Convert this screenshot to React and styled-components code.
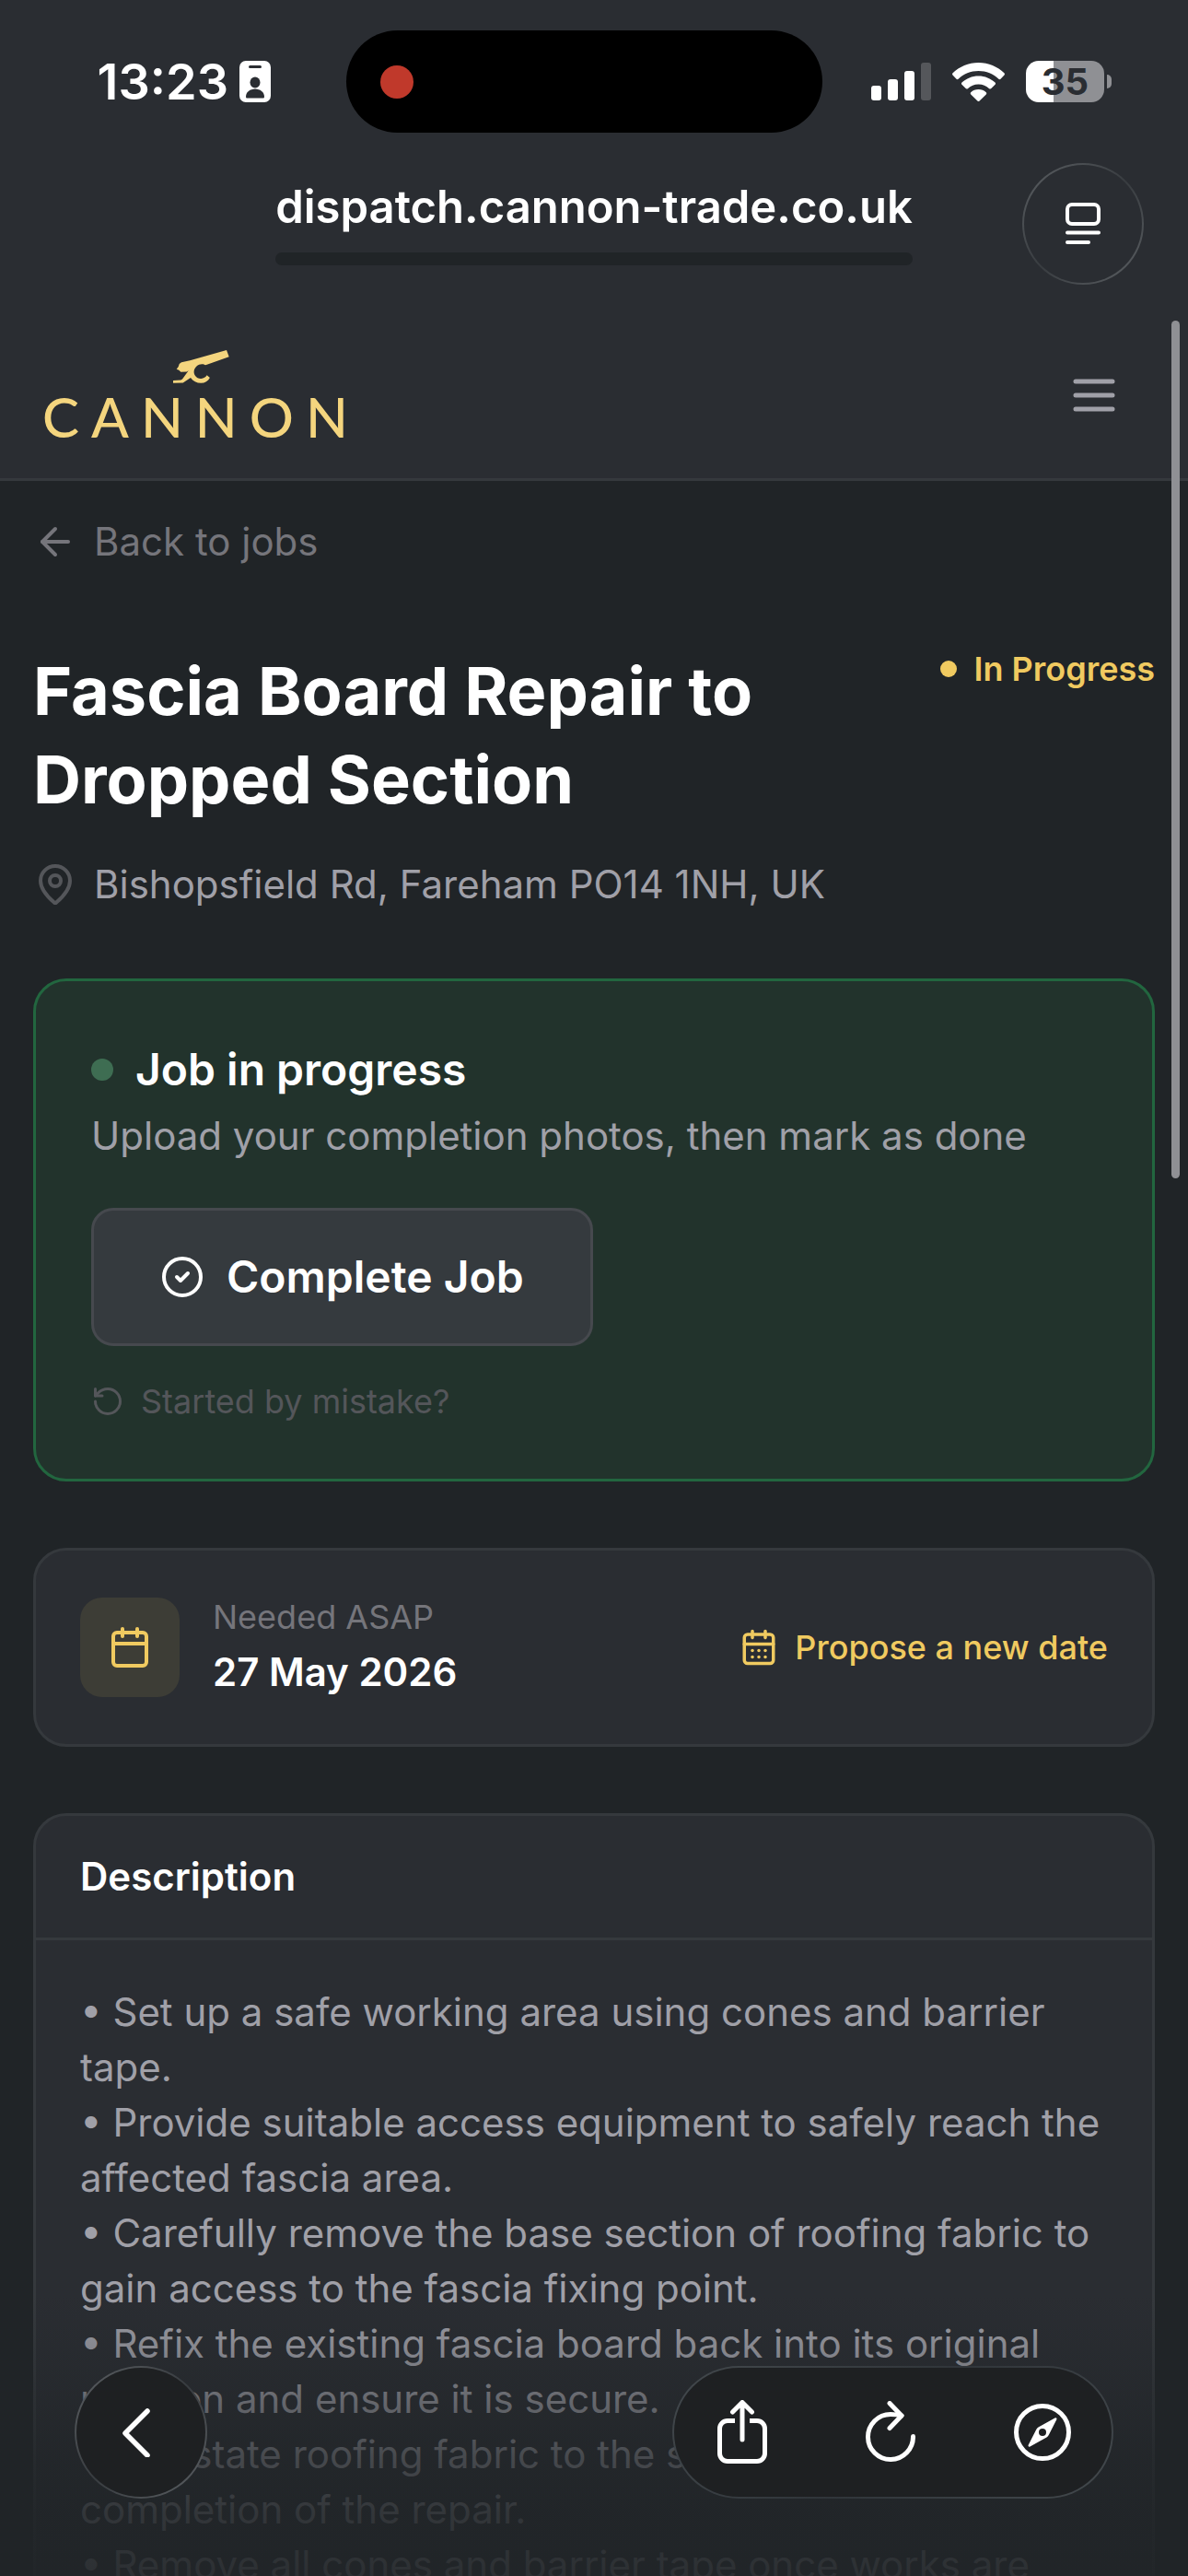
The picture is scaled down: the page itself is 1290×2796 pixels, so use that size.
import React from "react";
import styled, { createGlobalStyle } from "styled-components";
import {
  ArrowLeft,
  Calendar,
  CalendarDays,
  CircleCheck,
  MapPin,
  RotateCcw,
} from "lucide-react";

const colors = {
  page: "#202427",
  surface: "#2a2d32",
  line: "#35393d",
  text: "#ffffff",
  soft: "#a0a0a8",
  muted: "#75757b",
  faint: "#54565a",
  gold: "#f0ca60",
  logo: "#f4d57e",
  glass: "#1e2022",
};

const GlobalStyle = createGlobalStyle`
  *, *::before, *::after {
    box-sizing: border-box;
  }
  body {
    margin: 0;
    background: ${colors.page};
    color: ${colors.text};
    font-family: Inter, "Liberation Sans", sans-serif;
  }
  h1, h2, p {
    margin: 0;
  }
  button {
    font: inherit;
    color: inherit;
    border: 0;
    padding: 0;
    background: none;
    cursor: pointer;
  }
  a {
    color: inherit;
    text-decoration: none;
  }
  svg {
    display: block;
    flex-shrink: 0;
  }
`;

const Screen = styled.div`
  position: relative;
  display: flex;
  flex-direction: column;
  height: 100vh;
  overflow: hidden;
`;

/* ---------- status bar ---------- */

const StatusBar = styled.div`
  flex-shrink: 0;
  display: grid;
  grid-template-columns: 1fr 517px 1fr;
  align-items: center;
  padding: 33px 83px 33px 62px;
  background: ${colors.surface};
`;

const StatusLeft = styled.div`
  display: flex;
  align-items: center;
  justify-content: flex-end;
  gap: 12px;
  padding-right: 82px;
`;

const Clock = styled.span`
  font-size: 54px;
  line-height: 60px;
  font-weight: 600;
`;

const Island = styled.div`
  display: flex;
  align-items: center;
  height: 111px;
  padding: 0 37px;
  border-radius: 56px;
  background: #000000;
`;

const RecordDot = styled.span`
  width: 36px;
  height: 36px;
  border-radius: 50%;
  background: #c0392b;
`;

const StatusRight = styled.div`
  display: flex;
  align-items: center;
  justify-content: flex-end;
  gap: 23px;
`;

const Battery = styled.div`
  display: flex;
  align-items: center;
  gap: 3px;
`;

const BatteryBody = styled.span`
  width: 85px;
  height: 45px;
  border-radius: 14px;
  background: linear-gradient(to right, #ffffff 35%, #8f9094 35%);
  color: ${colors.surface};
  font-size: 40px;
  line-height: 45px;
  font-weight: 700;
  text-align: center;
`;

const BatteryTip = styled.span`
  width: 5px;
  height: 15px;
  border-radius: 0 5px 5px 0;
  background: #8f9094;
`;

/* ---------- browser address row ---------- */

const AddressRow = styled.div`
  flex-shrink: 0;
  display: grid;
  grid-template-columns: 1fr auto 1fr;
  padding: 0 48px 30px;
  background: ${colors.surface};
`;

const Address = styled.div`
  grid-column: 2;
  padding-top: 18px;
`;

const AddressText = styled.div`
  font-size: 49px;
  line-height: 60px;
  font-weight: 600;
`;

const AddressTrack = styled.div`
  height: 14px;
  margin-top: 19px;
  border-radius: 7px;
  background: ${colors.page};
`;

const RoundButton = styled.button`
  display: flex;
  align-items: center;
  justify-content: center;
  justify-self: end;
  width: ${({ $size }) => $size}px;
  height: ${({ $size }) => $size}px;
  border: 2px solid transparent;
  border-radius: 50%;
  background:
    linear-gradient(${({ $fill }) => $fill}, ${({ $fill }) => $fill}) padding-box,
    linear-gradient(135deg, #5c6064, #383c40 50%, #5c6064) border-box;
`;

/* ---------- site header ---------- */

const SiteHeader = styled.header`
  flex-shrink: 0;
  display: flex;
  align-items: center;
  justify-content: space-between;
  height: 183px;
  padding: 0 36px;
  background: ${colors.surface};
  border-bottom: 3px solid ${colors.line};
`;

const Logo = styled.a`
  display: flex;
  flex-direction: column;
  align-items: center;
  gap: 8px;
  padding-left: 10px;
  color: ${colors.logo};
`;

const Wordmark = styled.span`
  font-family: Lato, sans-serif;
  font-size: 60px;
  line-height: 54px;
  font-weight: 500;
  letter-spacing: 13px;
`;

const MenuButton = styled.button`
  padding: 36px;
`;

/* ---------- page ---------- */

const Main = styled.main`
  flex: 1;
  min-height: 0;
  overflow: hidden;
  padding: 36px;
`;

const Row = styled.div`
  display: flex;
  align-items: center;
  gap: 18px;
`;

const BackLink = styled.a`
  display: flex;
  align-items: center;
  gap: 18px;
  margin-bottom: 84px;
  color: ${colors.muted};
  font-size: 42px;
  line-height: 60px;
`;

const TitleRow = styled.div`
  display: flex;
  align-items: flex-start;
  justify-content: space-between;
  gap: 48px;
  margin-bottom: 36px;
`;

const Title = styled.h1`
  max-width: 860px;
  font-size: 72px;
  line-height: 96px;
  font-weight: 700;
`;

const Dot = styled.span`
  flex-shrink: 0;
  width: ${({ $size }) => $size}px;
  height: ${({ $size }) => $size}px;
  border-radius: 50%;
  background: ${({ $color }) => $color};
`;

const Status = styled(Row)`
  flex-shrink: 0;
  color: ${colors.gold};
  font-size: 36px;
  line-height: 48px;
  font-weight: 600;
`;

const Location = styled(Row)`
  margin-bottom: 72px;
  color: ${colors.soft};
  font-size: 42px;
  line-height: 60px;
`;

const Card = styled.section`
  margin-bottom: 72px;
  border: 3px solid ${colors.line};
  border-radius: 36px;
  background: ${colors.surface};
`;

const ProgressCard = styled(Card)`
  padding: 60px;
  border-color: #22663f;
  background: #22332c;
`;

const ProgressTitle = styled.h2`
  display: flex;
  align-items: center;
  gap: 24px;
  margin-bottom: 6px;
  font-size: 48px;
  line-height: 72px;
  font-weight: 600;
`;

const ProgressHint = styled.p`
  color: ${colors.soft};
  font-size: 42px;
  line-height: 60px;
`;

const CompleteButton = styled.button`
  display: flex;
  align-items: center;
  gap: 24px;
  margin: 48px 0 36px;
  padding: 36px 72px;
  border: 3px solid #46494e;
  border-radius: 24px;
  background: #353a3e;
  font-size: 48px;
  line-height: 72px;
  font-weight: 600;
`;

const TextButton = styled.button`
  display: flex;
  align-items: center;
  gap: 18px;
  color: ${({ $color }) => $color};
  font-size: 36px;
  line-height: 48px;
  font-weight: ${({ $weight }) => $weight || 400};
`;

const DateCard = styled(Card)`
  display: flex;
  align-items: center;
  gap: 36px;
  padding: 48px;
`;

const IconTile = styled.div`
  display: flex;
  align-items: center;
  justify-content: center;
  width: 108px;
  height: 108px;
  border-radius: 24px;
  background: #3d3d36;
  color: ${colors.gold};
`;

const DateText = styled.div`
  flex: 1;
  display: flex;
  flex-direction: column;
  gap: 6px;
`;

const DateLabel = styled.span`
  color: ${colors.muted};
  font-size: 36px;
  line-height: 48px;
`;

const DateValue = styled.span`
  font-size: 42px;
  line-height: 60px;
  font-weight: 600;
`;

const CardHeading = styled.h2`
  padding: 36px 48px;
  border-bottom: 3px solid ${colors.line};
  font-size: 42px;
  line-height: 60px;
  font-weight: 600;
`;

const Description = styled.div`
  padding: 48px;
  color: ${colors.soft};
  font-size: 42px;
  line-height: 60px;
`;

/* ---------- overlays ---------- */

const ScrollThumb = styled.div`
  position: absolute;
  top: 348px;
  right: 9px;
  width: 9px;
  height: 931px;
  border-radius: 5px;
  background: #8f9094;
`;

const BottomBar = styled.nav`
  position: absolute;
  left: 0;
  right: 0;
  bottom: 0;
  display: flex;
  align-items: flex-end;
  justify-content: space-between;
  height: 306px;
  padding: 0 81px 84px;
  background: linear-gradient(
    rgba(32, 36, 39, 0),
    rgba(32, 36, 39, 0.2) 19%,
    rgba(32, 36, 39, 0.46) 38%,
    rgba(32, 36, 39, 0.7) 58%,
    rgba(32, 36, 39, 0.86) 78%,
    rgba(32, 36, 39, 0.9)
  );
`;

const ToolPill = styled.div`
  display: flex;
  align-items: center;
  justify-content: space-between;
  width: 479px;
  height: 144px;
  padding: 0 44px 0 47px;
  border: 2px solid transparent;
  border-radius: 72px;
  background:
    linear-gradient(${colors.glass}, ${colors.glass}) padding-box,
    linear-gradient(135deg, #43494d, #30353a 50%, #43494d) border-box;
`;

const steps = [
  "Set up a safe working area using cones and barrier tape.",
  "Provide suitable access equipment to safely reach the affected fascia area.",
  "Carefully remove the base section of roofing fabric to gain access to the fascia fixing point.",
  "Refix the existing fascia board back into its original position and ensure it is secure.",
  "Reinstate roofing fabric to the structure upon completion of the repair.",
  "Remove all cones and barrier tape once works are",
];

const IdBadgeIcon = () => (
  <svg width="34" height="45" viewBox="0 0 34 45">
    <rect width="34" height="45" rx="7" fill="#fff" />
    <rect x="10" y="5" width="14" height="3" rx="1.5" fill={colors.surface} />
    <ellipse cx="17" cy="23.500" rx="5.500" ry="6" fill={colors.surface} />
    <path d="M7 39c0-5 4.500-8.500 10-8.500S27 34 27 39c0 1-.6 1.500-1.500 1.500h-17C7.600 40.500 7 40 7 39z" fill={colors.surface} />
  </svg>
);

const SignalIcon = () => (
  <svg width="65" height="41" viewBox="0 0 65 41" fill="#fff">
    <rect x="0" y="25" width="11" height="16" rx="3" />
    <rect x="18" y="18" width="11" height="23" rx="3" />
    <rect x="36" y="9" width="11" height="32" rx="3" />
    <rect x="54" y="0" width="11" height="41" rx="3" fill="#55575b" />
  </svg>
);

const WifiIcon = () => (
  <svg width="57" height="42" viewBox="0 0 57 42" fill="#fff">
    <path d="M28.500 0C17.600 0 7.800 4.300.6 11.300c-.7.700-.7 1.600-.1 2.200l4 4.300c.6.600 1.500.6 2.100 0C12.300 12.300 20 9 28.500 9s16.200 3.300 21.900 8.800c.6.600 1.500.6 2.100 0l4-4.300c.6-.6.600-1.500-.1-2.200C49.200 4.300 39.400 0 28.500 0z" />
    <path d="M28.500 14.500c-7 0-13.300 2.700-18 7.100-.7.600-.7 1.500-.1 2.200l4.300 4.300c.5.600 1.400.6 2.100.1 3.100-2.900 7.200-4.700 11.700-4.700s8.600 1.800 11.700 4.700c.7.500 1.600.5 2.100-.1l4.300-4.300c.6-.7.6-1.600-.1-2.200-4.700-4.400-11-7.100-18-7.100z" />
    <path d="M28.500 29c-3.200 0-6.100 1.200-8.300 3.200-.7.600-.6 1.500 0 2.200l7.200 7.200c.6.600 1.600.6 2.200 0l7.200-7.200c.6-.7.700-1.600 0-2.200-2.200-2-5.100-3.200-8.300-3.200z" />
  </svg>
);

const ReaderIcon = () => (
  <svg width="38" height="46" viewBox="0 0 38 46" fill="none" stroke="#fff" strokeWidth="4" strokeLinecap="round">
    <rect x="2" y="2" width="34" height="21" rx="5" />
    <path d="M2 32.500h34M2 43h23" />
  </svg>
);

const CannonIcon = () => (
  <svg width="61" height="37" viewBox="0 0 61 37" fill="currentColor">
    <path d="M58 0 60.700 7.300 36.700 15.700c-1.200.6-2.300.6-3.200-.1-2.700-.8-5.800-.2-8 1.900-3.300 3-3.700 7.500-1.400 10.500 1.500 2.200 3.900 3.200 6.400 3 2.700-.2 4.800-1.500 6.200-3.700L39.900 30c-2 3.600-5.400 5.800-9.700 5.800-4.500 0-8.700-2-11.200-5.800l-8.300 5.600L0 35.800V33l8.300-.4 1.700-1.200 6.700-9.100-1.900 1.200-6.500.3-2-2.100-2.600-1 2-2.700 1-3L9 13.300l9.300-2z" />
  </svg>
);

// classic three-bar glyph with even 6 unit spacing
const MenuIcon = () => (
  <svg width="60" height="60" viewBox="0 0 24 24" fill="none" stroke={colors.soft} strokeWidth="2" strokeLinecap="round">
    <path d="M4 6h16M4 12h16M4 18h16" />
  </svg>
);

const ChevronIcon = () => (
  <svg width="42" height="54" viewBox="0 0 42 54" fill="none" stroke="#fff" strokeWidth="5.500" strokeLinecap="round" strokeLinejoin="round">
    <path d="M28 4 4 28l24 24" />
  </svg>
);

const ShareIcon = () => (
  <svg width="54" height="70" viewBox="0 0 54 70" fill="none" stroke="#fff" strokeWidth="5" strokeLinecap="round" strokeLinejoin="round">
    <path d="M27 43V3M16.500 13 27 2.500 37.500 13" />
    <path strokeLinecap="butt" d="M19 22.500h-8a8.500 8.500 0 0 0-8.500 8.500v27a8.500 8.500 0 0 0 8.500 8.500h32a8.500 8.500 0 0 0 8.500-8.500V31a8.500 8.500 0 0 0-8.500-8.500h-8" />
  </svg>
);

const ReloadIcon = () => (
  <svg width="54" height="68" viewBox="0 0 54 68" fill="none" stroke="#fff" strokeWidth="5" strokeLinecap="round" strokeLinejoin="round">
    <path d="M51.500 38.500A24.500 24.500 0 1 1 27 14.500q6 0 12 1.500" />
    <path d="M26 2.500 39 16 26 29.500" />
  </svg>
);

const CompassIcon = () => (
  <svg width="62" height="62" viewBox="0 0 62 62">
    <circle cx="31" cy="31" r="28.500" fill="none" stroke="#fff" strokeWidth="5" />
    <path d="M44.500 15.500c1.300-.8 2.500.4 1.800 1.700L38 33.500a7 7 0 0 1-2.500 3L17.500 46.500c-1.300.8-2.500-.4-1.800-1.700L24 28.500a7 7 0 0 1 2.500-3z" fill="#fff" />
    <circle cx="31" cy="31" r="4" fill={colors.glass} />
  </svg>
);

const App = () => {
  return (
    <Screen>
      <GlobalStyle />

      <StatusBar>
        <StatusLeft>
          <Clock>13:23</Clock>
          <IdBadgeIcon />
        </StatusLeft>
        <Island>
          <RecordDot />
        </Island>
        <StatusRight>
          <SignalIcon />
          <WifiIcon />
          <Battery>
            <BatteryBody>35</BatteryBody>
            <BatteryTip />
          </Battery>
        </StatusRight>
      </StatusBar>

      <AddressRow>
        <Address>
          <AddressText>dispatch.cannon-trade.co.uk</AddressText>
          <AddressTrack />
        </Address>
        <RoundButton $size={132} $fill={colors.surface} aria-label="Page menu">
          <ReaderIcon />
        </RoundButton>
      </AddressRow>

      <SiteHeader>
        <Logo href="#">
          <CannonIcon />
          <Wordmark>CANNON</Wordmark>
        </Logo>
        <MenuButton aria-label="Open menu">
          <MenuIcon />
        </MenuButton>
      </SiteHeader>

      <Main>
        <BackLink href="#">
          <ArrowLeft size={48} />
          Back to jobs
        </BackLink>

        <TitleRow>
          <Title>Fascia Board Repair to Dropped Section</Title>
          <Status>
            <Dot $size={18} $color={colors.gold} />
            In Progress
          </Status>
        </TitleRow>

        <Location>
          <MapPin size={48} color={colors.faint} />
          Bishopsfield Rd, Fareham PO14 1NH, UK
        </Location>

        <ProgressCard>
          <ProgressTitle>
            <Dot $size={24} $color="#3e6d52" />
            Job in progress
          </ProgressTitle>
          <ProgressHint>
            Upload your completion photos, then mark as done
          </ProgressHint>
          <CompleteButton>
            <CircleCheck size={48} />
            Complete Job
          </CompleteButton>
          <TextButton $color={colors.faint}>
            <RotateCcw size={36} />
            Started by mistake?
          </TextButton>
        </ProgressCard>

        <DateCard>
          <IconTile>
            <Calendar size={48} />
          </IconTile>
          <DateText>
            <DateLabel>Needed ASAP</DateLabel>
            <DateValue>27 May 2026</DateValue>
          </DateText>
          <TextButton $color={colors.gold} $weight={500}>
            <CalendarDays size={42} />
            Propose a new date
          </TextButton>
        </DateCard>

        <Card>
          <CardHeading>Description</CardHeading>
          <Description>
            {steps.map((step) => (
              <p key={step}>• {step}</p>
            ))}
          </Description>
        </Card>
      </Main>

      <ScrollThumb />

      <BottomBar>
        <RoundButton $size={144} $fill={colors.glass} aria-label="Back">
          <ChevronIcon />
        </RoundButton>
        <ToolPill>
          <button aria-label="Share">
            <ShareIcon />
          </button>
          <button aria-label="Reload">
            <ReloadIcon />
          </button>
          <button aria-label="Open in browser">
            <CompassIcon />
          </button>
        </ToolPill>
      </BottomBar>
    </Screen>
  );
};

export default App;
